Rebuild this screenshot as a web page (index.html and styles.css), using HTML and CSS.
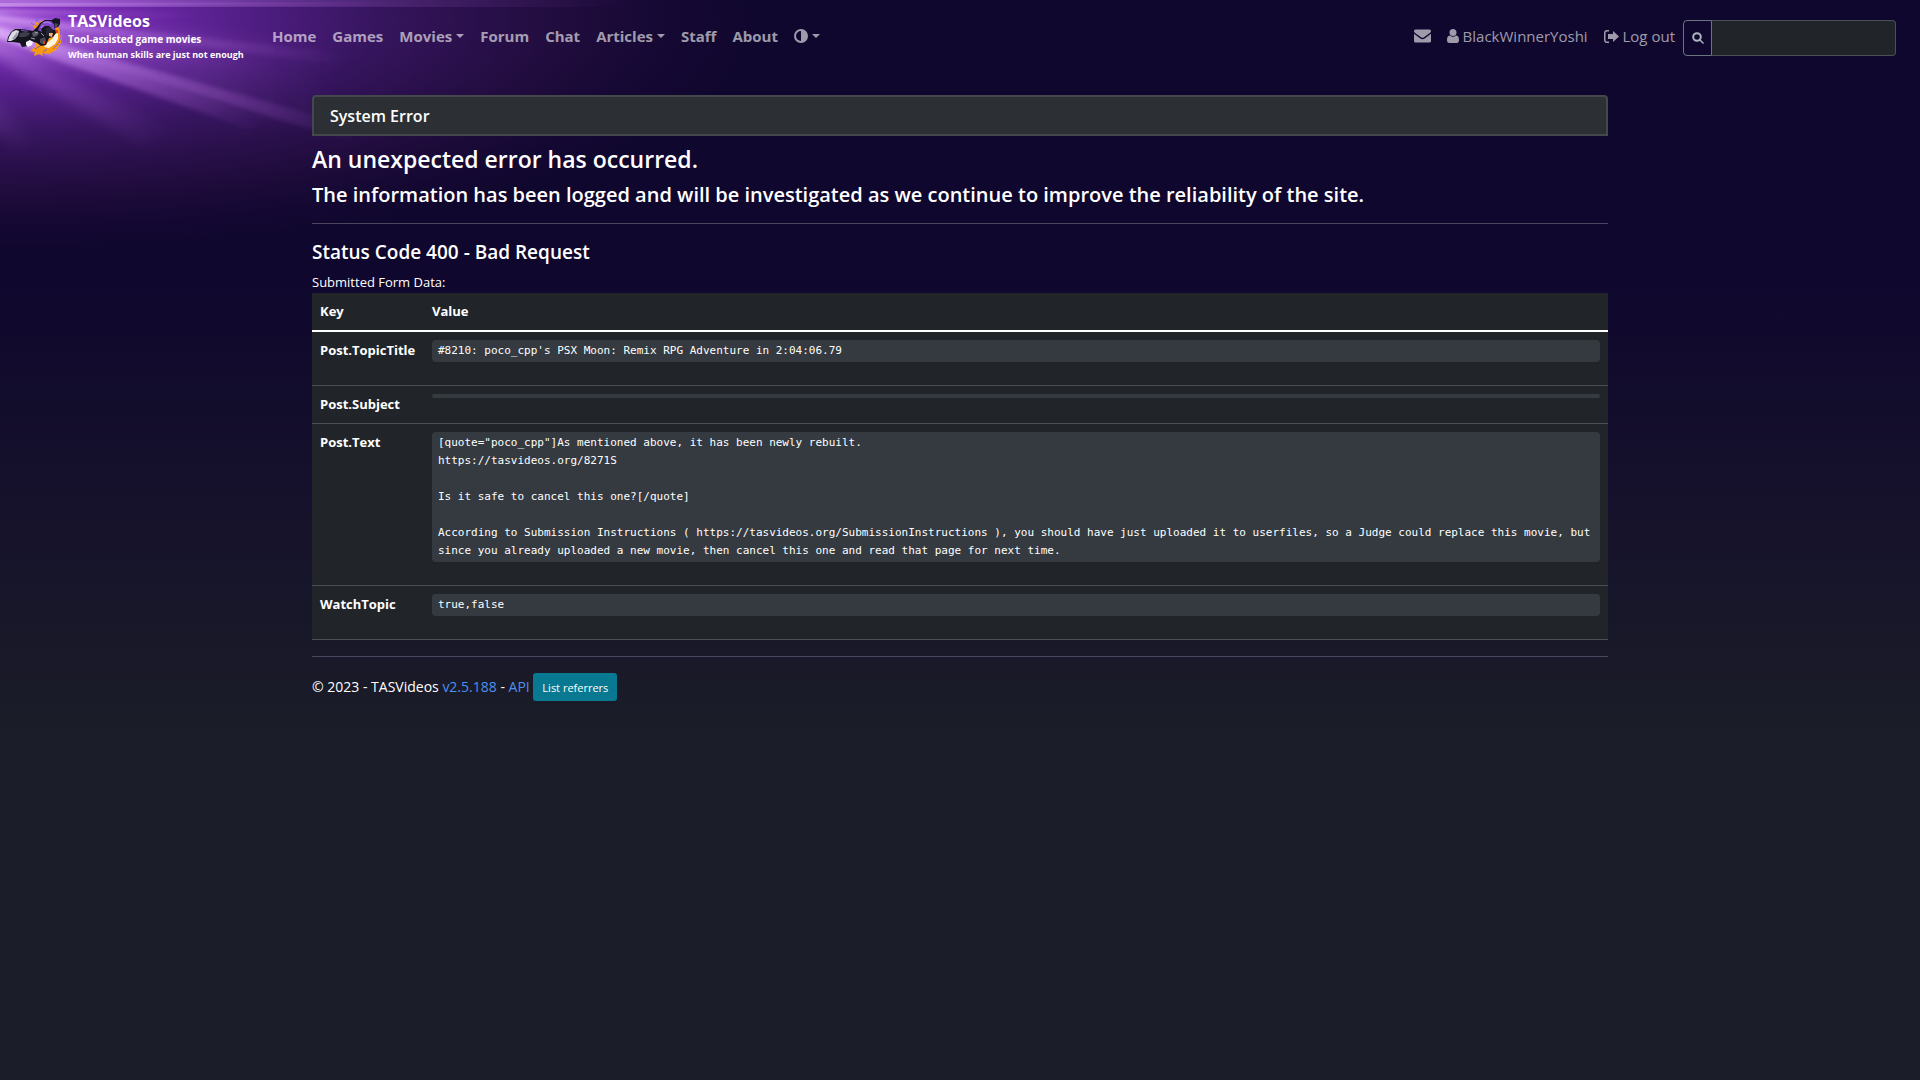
FILE: index.html
```html
<!DOCTYPE html>
<html lang="en">
<head>
	<meta charset="utf-8">
	<meta name="viewport" content="width=device-width, initial-scale=1">
	<title>System Error - TASVideos</title>
	<link rel="stylesheet" href="styles.css">
</head>
<body>
	<!-- light rays behind the navbar -->
	<svg class="rays" width="1000" height="300" viewBox="0 0 1000 300" aria-hidden="true">
		<defs>
			<radialGradient id="glow" gradientUnits="userSpaceOnUse" cx="0" cy="0" r="1" gradientTransform="translate(0 20) scale(760 230)">
				<stop offset="0" stop-color="#9038cc"/>
				<stop offset=".15" stop-color="#7a2cb8" stop-opacity=".95"/>
				<stop offset=".3" stop-color="#62249c" stop-opacity=".85"/>
				<stop offset=".5" stop-color="#4a1c78" stop-opacity=".65"/>
				<stop offset=".75" stop-color="#34124f" stop-opacity=".45"/>
				<stop offset="1" stop-color="#200a40" stop-opacity="0"/>
			</radialGradient>
			<linearGradient id="ray">
				<stop offset="0" stop-color="#e6bcff" stop-opacity=".75"/>
				<stop offset=".35" stop-color="#c88af0" stop-opacity=".45"/>
				<stop offset=".7" stop-color="#a860d0" stop-opacity=".25"/>
				<stop offset="1" stop-color="#9a50c8" stop-opacity="0"/>
			</linearGradient>
			<filter id="soft" x="-10%" y="-30%" width="120%" height="160%"><feGaussianBlur stdDeviation="2"/></filter>
			<filter id="softer" x="-10%" y="-30%" width="120%" height="160%"><feGaussianBlur stdDeviation="6"/></filter>
		</defs>
		<rect width="1000" height="300" fill="url(#glow)"/>
		<g fill="url(#ray)">
			<path d="M-20 0 L640 0 L640 7 L-20 7z" opacity=".6"/>
			<path d="M-20 3 L420 2 L420 5 L-20 6z" opacity=".6"/>
		</g>
		<g filter="url(#soft)" fill="url(#ray)">
			<path d="M-20 13 L350 54 L350 66 L-20 19z" opacity=".8"/>
			<path d="M-20 21 L360 128 L360 144 L-20 28z"/>
			<path d="M-20 24 L270 120 L250 130 L-20 32z"/>
			<path d="M-20 9 L200 14 L200 18 L-20 12z"/>
		</g>
		<g filter="url(#softer)" fill="url(#ray)">
			<path d="M-20 34 L180 132 L140 144 L-20 48z" opacity=".45"/>
			<path d="M-20 85 L40 140 L20 150 L-20 120z" opacity=".2"/>
			<path d="M-20 12 L340 44 L340 80 L-20 34z" opacity=".4"/>
			<path d="M-20 10 L340 84 L330 134 L-20 46z" opacity=".4"/>
		</g>
	</svg>

	<header class="navbar">
		<a class="brand" href="#">
			<svg class="brand-logo" width="62" height="40" viewBox="0 0 62 40" aria-hidden="true">
				<path d="M31 13l-3-4 5 1-2-5 5 3 1-4 4 3 5-3 5 3 3 4 2 3 2 6-1 7-5 7-7 4-7-1 1 3-4-2-5 2 1-4-5-1 5-4z" fill="#f79a10"/>
				<path d="M30 9l-3-2M33 6l-1-3M26 12l-7 0M35 4l-2-2M56 13l1 8-2 6-6 6M43 33l-4 3M36 30l-5 3M50 4l1-3M24 14l-4-1" fill="none" stroke="#8a5ad8" stroke-width="1"/>
				<path d="M54 17l0 6-3 5-6 4-5-1 3-4 5-4 3-5z" fill="#fff4e0"/>
				<path d="M3 26l1-5 3-5 4-3 6 0 7 1 5 1 4-4 3-4 5-3h7l3-2 5 1 0 5-2 3-3 1 1 5-3 4-4 1-3 7-5 1-4-3-6-2-3 5-6 1-2-4-7-1-4 0z" fill="#15151f"/>
				<path d="M4 25l1-4 3-5 4-2 3 1-1 4-3 4-4 2z" fill="#dcdce4"/>
				<path d="M8 23l5-7 1 2-3 5z" fill="#9a9aac"/>
				<path d="M16 17l5-1 5 1-1 2-4 2-6 0z" fill="#3e3e4e"/>
				<path d="M17 14l3 1 4 0" fill="none" stroke="#8052c8" stroke-width="1"/>
				<path d="M28 17l3-2 4 2-2 3-4 1z" fill="#555566"/>
				<path d="M31 17l3-1M27 22l4 1M37 17l3 3" fill="none" stroke="#a4a4b4" stroke-width="1"/>
				<path d="M37 8l4-3 6 0 3 3 1 6-2 0-4-4-4 0-4 3 1 3-4-2z" fill="#8048c8"/>
				<path d="M39 7l5-1 3 2M37 12l2-3" fill="none" stroke="#b08af4" stroke-width="1"/>
				<path d="M42 12l4-1 3 5-3 4-4-1z" fill="#262632"/>
				<path d="M45 17l4 0-1 4-3-1z" fill="#f0b080"/>
				<path d="M22 26l4-2 3 2-1 3-4 2-2-2z" fill="#f4f4fa"/>
				<path d="M36 23l5-2 1 4-3 3-3-1z" fill="#484858"/>
				<path d="M39 25h2v3h-2zM52 14h2v3h-2z" fill="#e83a18"/>
				<path d="M51 7l3 1-1 3-2 0z" fill="#484858"/>
			</svg>
			<span class="brand-text">
				<span class="brand-name">TASVideos</span>
				<span class="brand-line">Tool-assisted game movies</span>
				<span class="brand-motto">When human skills are just not enough</span>
			</span>
		</a>
		<nav class="nav nav-main">
			<a href="#">Home</a>
			<a href="#">Games</a>
			<a class="dropdown" href="#">Movies</a>
			<a href="#">Forum</a>
			<a href="#">Chat</a>
			<a class="dropdown" href="#">Articles</a>
			<a href="#">Staff</a>
			<a href="#">About</a>
			<a class="dropdown" href="#" aria-label="Theme"><svg class="icon" width="14" height="14" viewBox="0 0 14 14"><path fill-rule="evenodd" d="M7 0a7 7 0 100 14A7 7 0 007 0zM7 2v10A5 5 0 017 2z"/></svg></a>
		</nav>
		<nav class="nav nav-user">
			<a href="#" aria-label="Messages"><svg class="icon" width="17" height="14" viewBox="0 0 17 14"><path d="M0 2a1.500 1.500 0 011.500-1.500h14A1.500 1.500 0 0117 2c0 1-.7 1.700-1.500 2.300L10 8.200c-1 .7-2 .7-3 0L1.500 4.300C.7 3.700 0 3 0 2zm0 2.800l6.300 4.700c1.400 1 3 1 4.400 0L17 4.800V12a1.500 1.500 0 01-1.500 1.500h-14A1.500 1.500 0 010 12z"/></svg></a>
			<a href="#"><svg class="icon" width="12" height="14" viewBox="0 0 12 14"><path d="M6 0a3.500 3.500 0 110 7 3.500 3.500 0 010-7zM2.800 6.500c1.900 1.800 4.500 1.800 6.400 0C11.500 6.800 12 9 12 11c0 2-.8 3-2.300 3H2.300C.8 14 0 13 0 11c0-2 .5-4.200 2.800-4.500z"/></svg> BlackWinnerYoshi</a>
			<a href="#"><svg class="icon" width="15" height="13" viewBox="0 0 15 13"><path d="M5 0v1.500H3A1.500 1.500 0 001.500 3v7A1.500 1.500 0 003 11.500h2V13H3a3 3 0 01-3-3V3a3 3 0 013-3zM9 1l6 5.500L9 12V9H4V4h5z"/></svg> Log out</a>
			<form class="search">
				<button class="search-btn" type="button" aria-label="Search"><svg class="icon" width="12" height="12" viewBox="0 0 12 12"><circle cx="5" cy="5" r="3.800" fill="none" stroke="currentColor" stroke-width="2"/><path d="M7.500 8.500l1-1L12 11l-1 1z"/></svg></button>
				<input class="search-input" type="text" aria-label="Search text">
			</form>
		</nav>
	</header>

	<main class="container">
		<div class="card-header">System Error</div>
		<h2>An unexpected error has occurred.</h2>
		<h3>The information has been logged and will be investigated as we continue to improve the reliability of the site.</h3>
		<hr>
		<h4>Status Code 400 - Bad Request</h4>
		<div>Submitted Form Data:</div>
		<table class="table">
			<thead>
				<tr><th class="key" scope="col">Key</th><th scope="col">Value</th></tr>
			</thead>
			<tbody>
				<tr>
					<th scope="row">Post.TopicTitle</th>
					<td><pre>#8210: poco_cpp's PSX Moon: Remix RPG Adventure in 2:04:06.79</pre></td>
				</tr>
				<tr>
					<th scope="row">Post.Subject</th>
					<td><pre></pre></td>
				</tr>
				<tr>
					<th scope="row">Post.Text</th>
					<td><pre>[quote="poco_cpp"]As mentioned above, it has been newly rebuilt.
https://tasvideos.org/8271S

Is it safe to cancel this one?[/quote]

According to Submission Instructions ( https://tasvideos.org/SubmissionInstructions ), you should have just uploaded it to userfiles, so a Judge could replace this movie, but since you already uploaded a new movie, then cancel this one and read that page for next time.</pre></td>
				</tr>
				<tr>
					<th scope="row">WatchTopic</th>
					<td><pre>true,false</pre></td>
				</tr>
			</tbody>
		</table>
		<hr>
		<footer class="footer">
			© 2023 - TASVideos <a href="#">v2.5.188</a> - <a href="#">API</a>
			<button class="btn" type="button">List referrers</button>
		</footer>
	</main>
</body>
</html>
```
FILE: styles.css
```css
* {
	box-sizing: border-box;
}
body {
	margin: 0;
	min-height: 100vh;
	color: #fff;
	background: #1b1d28 linear-gradient(#10072e 280px, #1b1d28 740px);
	font-family: "Open Sans", "Noto Sans", sans-serif;
	font-size: 13px;
	line-height: 21px;
}
a {
	color: #4a90f0;
	text-decoration: none;
}
.rays {
	position: absolute;
	top: 0;
	left: 0;
	z-index: -1;
}

/* navbar */
.navbar {
	display: flex;
	align-items: center;
	height: 72px;
	padding: 0 24px 0 4px;
}
.brand {
	display: flex;
	align-items: center;
	gap: 2px;
	color: #fff;
	font-weight: 700;
}
.brand-text {
	display: flex;
	flex-direction: column;
	width: 204px;
	padding-top: 2px;
}
.brand-name {
	font-size: 16px;
	line-height: 20px;
}
.brand-line {
	font-size: 10px;
	line-height: 16px;
}
.brand-motto {
	font-size: 9px;
	line-height: 16px;
	white-space: nowrap;
}
.nav {
	display: flex;
	align-items: center;
	gap: 16px;
	font-size: 15px;
}
.nav a {
	color: rgba(255, 255, 255, .6);
	white-space: nowrap;
}
.nav-main {
	font-weight: 700;
}
.nav-user {
	margin-left: auto;
}
.icon {
	fill: currentColor;
	vertical-align: -1px;
}
.dropdown::after {
	content: "";
	display: inline-block;
	margin-left: 4px;
	vertical-align: 4px;
	border-top: 4px solid;
	border-left: 4px solid transparent;
	border-right: 4px solid transparent;
}
.search {
	display: flex;
	margin-left: -8px;
	padding-top: 4px;
}
.search-btn {
	width: 29px;
	height: 36px;
	padding: 0;
	color: #adb5bd;
	background: none;
	border: 1px solid #6c757d;
	border-radius: 4px 0 0 4px;
}
.search-input {
	width: 184px;
	height: 36px;
	color: #fff;
	background: #212529;
	border: 1px solid #495057;
	border-left: 0;
	border-radius: 0 4px 4px 0;
}

/* content */
.container {
	max-width: 1320px;
	margin: 0 auto;
	padding: 23px 12px;
}
.card-header {
	padding: 9px 16px 7px;
	font-size: 16px;
	font-weight: 600;
	background: #2c3034;
	border: 2px solid #45484a;
	border-radius: 4px 4px 0 0;
}
h2, h3, h4 {
	margin: 0 0 8px;
	font-weight: 600;
}
h2 {
	margin-top: 8px;
	font-size: 23px;
	line-height: 30px;
}
h3 {
	font-size: 20px;
	line-height: 25px;
}
h4 {
	font-size: 19px;
	line-height: 24px;
}
hr {
	margin: 16px 0;
	border: 0;
	border-top: 1px solid #4b4660;
}
.table {
	width: 100%;
	margin-bottom: 16px;
	border-collapse: collapse;
	background: #212529;
}
.table th,
.table td {
	padding: 8px;
	text-align: left;
	vertical-align: top;
	border-bottom: 1px solid #495057;
}
.table thead th {
	border-bottom: 2px solid #fff;
}
.key {
	width: 112px;
}
pre {
	margin: 0 0 15px;
	padding: 2px 6px;
	font: 11px/18px "DejaVu Sans Mono", monospace;
	white-space: pre-wrap;
	background: #343a40;
	border-radius: 4px;
}
.footer {
	font-size: 14px;
}
.btn {
	height: 28px;
	padding: 0 9px;
	font: 11px "Open Sans", sans-serif;
	color: #fff;
	background: #087990;
	border: 0;
	border-radius: 3px;
}
```
